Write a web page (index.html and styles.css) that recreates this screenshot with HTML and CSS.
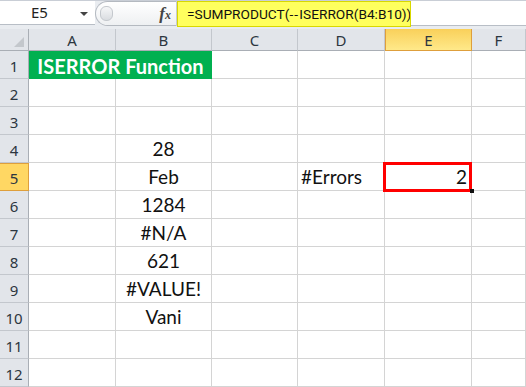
FILE: index.html
```html
<!DOCTYPE html>
<html lang="en">

<head>
    <meta charset="UTF-8">
    <title>ISERROR Function</title>
    <link rel="stylesheet" href="styles.css">
</head>

<body>
    <div class="formula-bar">
        <div class="name-box">E5<span class="drop-arrow"></span></div>
        <div class="fx-area">
            <span class="knob"></span>
            <span class="fx">f<span>x</span></span>
        </div>
        <div class="formula">=SUMPRODUCT(<span class="dash">--</span>ISERROR(B4:B10))</div>
        <div class="formula-rest"></div>
    </div>

    <div class="sheet">
        <!-- column headers -->
        <div class="hdr corner"><span class="corner-tri"></span></div>
        <div class="hdr">A</div>
        <div class="hdr">B</div>
        <div class="hdr">C</div>
        <div class="hdr">D</div>
        <div class="hdr hdr-active">E</div>
        <div class="hdr">F</div>

        <!-- row 1 -->
        <div class="rh">1</div>
        <div class="cell title">ISERROR Function</div>
        <div class="cell"></div>
        <div class="cell"></div>
        <div class="cell"></div>
        <div class="cell"></div>

        <!-- row 2 -->
        <div class="rh">2</div>
        <div class="cell"></div>
        <div class="cell"></div>
        <div class="cell"></div>
        <div class="cell"></div>
        <div class="cell"></div>
        <div class="cell"></div>

        <!-- row 3 -->
        <div class="rh">3</div>
        <div class="cell"></div>
        <div class="cell"></div>
        <div class="cell"></div>
        <div class="cell"></div>
        <div class="cell"></div>
        <div class="cell"></div>

        <!-- row 4 -->
        <div class="rh">4</div>
        <div class="cell"></div>
        <div class="cell center">28</div>
        <div class="cell"></div>
        <div class="cell"></div>
        <div class="cell"></div>
        <div class="cell"></div>

        <!-- row 5 -->
        <div class="rh rh-active">5</div>
        <div class="cell"></div>
        <div class="cell center">Feb</div>
        <div class="cell"></div>
        <div class="cell">#Errors</div>
        <div class="cell right selected">2<span class="fill-handle"></span></div>
        <div class="cell"></div>

        <!-- row 6 -->
        <div class="rh">6</div>
        <div class="cell"></div>
        <div class="cell center">1284</div>
        <div class="cell"></div>
        <div class="cell"></div>
        <div class="cell"></div>
        <div class="cell"></div>

        <!-- row 7 -->
        <div class="rh">7</div>
        <div class="cell"></div>
        <div class="cell center">#N/A</div>
        <div class="cell"></div>
        <div class="cell"></div>
        <div class="cell"></div>
        <div class="cell"></div>

        <!-- row 8 -->
        <div class="rh">8</div>
        <div class="cell"></div>
        <div class="cell center">621</div>
        <div class="cell"></div>
        <div class="cell"></div>
        <div class="cell"></div>
        <div class="cell"></div>

        <!-- row 9 -->
        <div class="rh">9</div>
        <div class="cell"></div>
        <div class="cell center">#VALUE!</div>
        <div class="cell"></div>
        <div class="cell"></div>
        <div class="cell"></div>
        <div class="cell"></div>

        <!-- row 10 -->
        <div class="rh">10</div>
        <div class="cell"></div>
        <div class="cell center">Vani</div>
        <div class="cell"></div>
        <div class="cell"></div>
        <div class="cell"></div>
        <div class="cell"></div>

        <!-- row 11 -->
        <div class="rh">11</div>
        <div class="cell"></div>
        <div class="cell"></div>
        <div class="cell"></div>
        <div class="cell"></div>
        <div class="cell"></div>
        <div class="cell"></div>

        <!-- row 12 -->
        <div class="rh">12</div>
        <div class="cell"></div>
        <div class="cell"></div>
        <div class="cell"></div>
        <div class="cell"></div>
        <div class="cell"></div>
        <div class="cell"></div>
    </div>
</body>

</html>
```

FILE: styles.css
```css
body {
    margin: 0;
    width: 526px;
    height: 387px;
    overflow: hidden;
    background: white;
    font-family: "Noto Sans", sans-serif;
}

/* formula bar */

.formula-bar {
    display: flex;
    align-items: flex-start;
    height: 29px;
    box-sizing: border-box;
    border-top: 1px solid #c9ced6;
    background-color: #e9ecf0;
}

.name-box {
    position: relative;
    width: 95px;
    height: 24px;
    box-sizing: border-box;
    border-bottom: 1px solid #b8bec6;
    background: white;
    font-size: 15px;
    line-height: 23px;
    color: #222;
    padding-left: 31px;
}

.drop-arrow {
    position: absolute;
    left: 80px;
    top: 11px;
    border-left: 4px solid transparent;
    border-right: 4px solid transparent;
    border-top: 4px solid #444;
}

.fx-area {
    display: flex;
    align-items: center;
    justify-content: space-between;
    width: 82px;
    height: 25px;
    box-sizing: border-box;
    border: 1px solid #b4b9c0;
    border-right: 1px solid #c8ccd2;
    border-radius: 13px 0 0 13px;
    background: linear-gradient(#ffffff, #eef0f2);
    padding: 0 5px 0 4px;
}

.knob {
    width: 11px;
    height: 13px;
    border-radius: 6px;
    border: 1px solid #c4c8cd;
    background: linear-gradient(#f6f7f8, #d9dce0);
}

.fx {
    font-family: "Liberation Serif", serif;
    font-style: italic;
    font-weight: bold;
    font-size: 17px;
    color: #444;
}

.fx span {
    font-size: 12px;
}

.formula {
    width: 234px;
    height: 26px;
    box-sizing: border-box;
    border: 1px solid #d8d800;
    background-color: #ffff5e;
    font-family: "Roboto", sans-serif;
    font-size: 13.7px;
    line-height: 24px;
    padding-left: 9px;
    color: #111;
    white-space: nowrap;
    overflow: hidden;
}

.dash {
    letter-spacing: 1.2px;
}

.formula-rest {
    flex: 1;
    height: 25px;
    box-sizing: border-box;
    border-bottom: 1px solid #b8bec6;
    background: white;
}

/* sheet grid */

.sheet {
    display: grid;
    grid-template-columns: 29px 87px 96px 86px 87px 87px 1fr;
    grid-template-rows: 22px;
    grid-auto-rows: 28px;
}

.hdr {
    display: flex;
    align-items: center;
    justify-content: center;
    box-sizing: border-box;
    background-color: #e2e5ea;
    border-right: 1px solid #c3c7cd;
    border-bottom: 1px solid #a9aeb5;
    font-size: 15px;
    color: #2c3640;
}

.corner {
    position: relative;
    border-right: 1px solid #a9aeb5;
}

.corner-tri {
    position: absolute;
    right: 4px;
    bottom: 3px;
    border-left: 10px solid transparent;
    border-bottom: 10px solid #c3c7cc;
}

.hdr-active {
    background: linear-gradient(#f9d05a, #ffe98a);
    border: 1px solid #de9f3c;
    border-top: none;
}

.rh {
    display: flex;
    align-items: center;
    justify-content: center;
    box-sizing: border-box;
    background-color: #e2e5ea;
    border-right: 1px solid #a9aeb5;
    border-bottom: 1px solid #c3c7cd;
    font-size: 15px;
    padding-top: 2px;
    color: #2c3640;
}

.rh-active {
    background-color: #ffd763;
    border: 1px solid #de9f3c;
    border-left: none;
}

.cell {
    display: flex;
    align-items: flex-end;
    box-sizing: border-box;
    border-right: 1px solid #d4d4d4;
    border-bottom: 1px solid #d4d4d4;
    font-family: "Lato", sans-serif;
    font-size: 19px;
    line-height: 20px;
    padding: 0 3px 3px;
    color: #111;
    white-space: nowrap;
}

.center {
    justify-content: center;
}

.right {
    justify-content: flex-end;
    padding-right: 4px;
}

.title {
    grid-column: span 2;
    justify-content: center;
    background-color: #00b050;
    border-right: none;
    border-bottom: none;
    color: white;
    font-weight: bold;
    font-size: 20px;
}

.selected {
    position: relative;
}

.selected::after {
    content: "";
    position: absolute;
    left: -2px;
    top: -1px;
    right: -1px;
    bottom: -2px;
    border: 3px solid #ff0000;
}

.fill-handle {
    position: absolute;
    right: -3px;
    bottom: -3px;
    width: 4px;
    height: 4px;
    background: #111;
    z-index: 1;
}
```
